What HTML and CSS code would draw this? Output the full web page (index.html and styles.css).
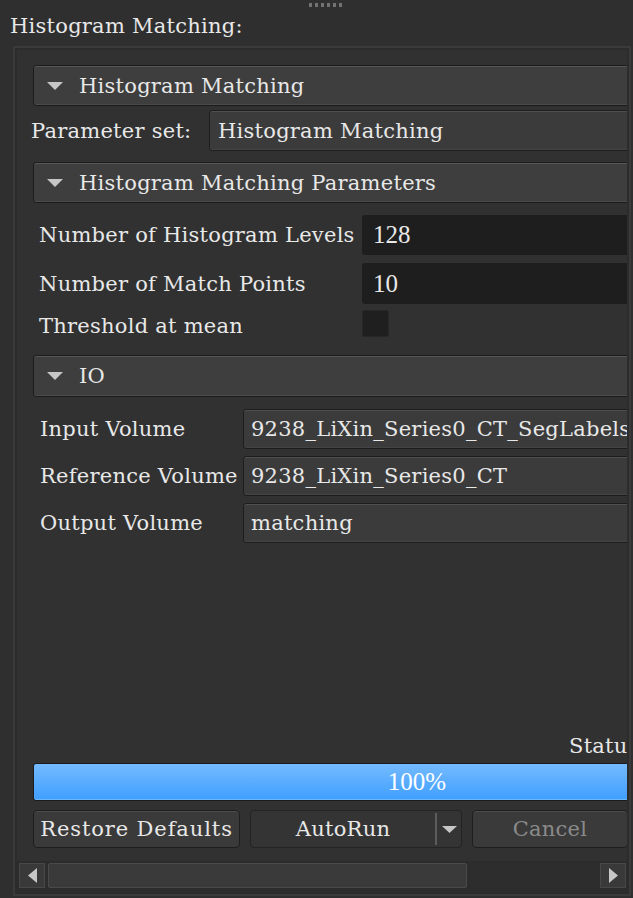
FILE: index.html
```html
<!DOCTYPE html>
<html>
<head>
<meta charset="utf-8">
<title>Histogram Matching</title>
<link rel="stylesheet" href="styles.css">
</head>
<body>
<div class="grip"><span></span><span></span><span></span><span></span><span></span><span></span></div>
<div class="title">Histogram Matching:</div>
<div class="frame">
  <div class="viewport">
    <div class="content">
      <div class="collapsible c1">
        <svg class="tri" width="16" height="8" viewBox="0 0 16 8"><polygon points="0,0 16,0 8,8"/></svg>
        <span>Histogram Matching</span>
      </div>
      <div class="param-set">
        <span class="lbl">Parameter set:</span>
        <div class="combo">Histogram Matching</div>
      </div>
      <div class="collapsible c2">
        <svg class="tri" width="16" height="8" viewBox="0 0 16 8"><polygon points="0,0 16,0 8,8"/></svg>
        <span>Histogram Matching Parameters</span>
      </div>
      <div class="form params">
        <div class="row r1"><span class="lbl">Number of Histogram Levels</span><div class="spin">128</div></div>
        <div class="row r2"><span class="lbl">Number of Match Points</span><div class="spin">10</div></div>
        <div class="row r3"><span class="lbl">Threshold at mean</span><div class="check"></div></div>
      </div>
      <div class="collapsible c3">
        <svg class="tri" width="16" height="8" viewBox="0 0 16 8"><polygon points="0,0 16,0 8,8"/></svg>
        <span>IO</span>
      </div>
      <div class="form io">
        <div class="row"><span class="lbl">Input Volume</span><div class="combo">9238_LiXin_Series0_CT_SegLabels</div></div>
        <div class="row"><span class="lbl">Reference Volume</span><div class="combo">9238_LiXin_Series0_CT</div></div>
        <div class="row"><span class="lbl">Output Volume</span><div class="combo">matching</div></div>
      </div>
      <div class="spacer"></div>
      <div class="status">Status</div>
      <div class="progress"><span>100%</span></div>
      <div class="buttons">
        <div class="btn restore">Restore Defaults</div>
        <div class="btn autorun">
          <span class="main">AutoRun</span>
          <span class="drop"><svg width="15" height="7" viewBox="0 0 15 7"><polygon points="0,0 15,0 7.5,7"/></svg></span>
        </div>
        <div class="btn cancel">Cancel</div>
      </div>
    </div>
  </div>
  <div class="hscroll">
    <div class="sbtn left"><svg width="9" height="15" viewBox="0 0 9 15"><polygon points="9,0 9,15 0,7.5"/></svg></div>
    <div class="track"><div class="thumb"></div></div>
    <div class="sbtn right"><svg width="9" height="15" viewBox="0 0 9 15"><polygon points="0,0 0,15 9,7.5"/></svg></div>
  </div>
</div>
</body>
</html>
```

FILE: styles.css
```css
* { box-sizing: border-box; }
html, body { margin: 0; padding: 0; }
body {
  background: #2f2f2f;
  width: 633px;
  height: 898px;
  overflow: hidden;
  font-family: "DejaVu Serif", "Liberation Serif", serif;
  font-size: 21px;
  letter-spacing: 0.25px;
  color: #e8e8e8;
  white-space: nowrap;
}

.grip { display: flex; gap: 3px; margin-left: 309px; padding-top: 3px; height: 7px; }
.grip span { width: 3px; height: 4px; background: #727272; }

.title { margin: 5px 0 0 10px; height: 28px; line-height: 28px; }

.frame {
  margin: 6px 0 0 13px;
  width: 618px;
  height: 850px;
  border: 2px solid #3a3a3a;
  padding: 2px 0 0 2px;
  background: #2c2c2c;
  display: flex;
  flex-direction: column;
}

.viewport {
  width: 610px;
  height: 811px;
  overflow: hidden;
  background: #313131;
}

.content {
  width: 800px;
  height: 811px;
  padding: 15px 16px 13px 16px;
  display: flex;
  flex-direction: column;
}

.collapsible {
  height: 41px;
  flex: none;
  display: flex;
  align-items: center;
  padding-left: 13px;
  background: #3e3e3e;
  border: 1px solid #1c1c1c;
  border-radius: 3px;
  box-shadow: inset 0 1px 0 #575757, inset 0 -1px 0 #4a4a4a;
}
.collapsible .tri { fill: #c6c6c6; margin-right: 16px; flex: none; }
.c2 { margin-top: 11px; }
.c3 { margin-top: 18px; height: 42px; }

.param-set {
  margin: 4px 0 0 -2px;
  height: 41px;
  display: flex;
  align-items: center;
}
.param-set .lbl { width: 178px; flex: none; }

.combo {
  flex: 1;
  height: 100%;
  display: flex;
  align-items: center;
  padding-left: 8px;
  background: #3b3b3b;
  border: 1px solid #1d1d1d;
  border-radius: 3px;
  box-shadow: inset 0 1px 0 #4f4f4f, inset 0 -1px 0 #444444;
}

.form { display: flex; flex-direction: column; }
.row { display: flex; align-items: center; flex: none; }

.params .row { padding-left: 6px; }
.params .lbl { width: 323px; flex: none; }
.params .r1 { margin-top: 12px; height: 40px; }
.params .r2 { margin-top: 8px; height: 41px; }
.params .r3 { margin-top: 6px; height: 27px; }
.params .r3 .lbl { position: relative; top: 2px; }

.spin {
  flex: 1;
  height: 100%;
  display: flex;
  align-items: center;
  padding-left: 11px;
  background: #1e1e1e;
  border-radius: 3px;
  font-family: "Liberation Serif", serif;
  font-size: 25px;
  letter-spacing: 0;
}

.check {
  width: 27px;
  height: 27px;
  background: #1f1f1f;
  border: 1px solid #272727;
  border-radius: 2px;
}

.io .row { padding-left: 7px; height: 40px; margin-top: 7px; }
.io .row:first-child { margin-top: 12px; }
.io .lbl { width: 203px; flex: none; }
.io .combo { padding-left: 7px; }

.spacer { flex: 1; }

.status { height: 20px; line-height: 20px; margin-left: 536px; flex: none; }

.progress {
  margin-top: 7px;
  height: 38px;
  flex: none;
  border: 1px solid #1b1b1b;
  border-radius: 3px;
  background: linear-gradient(#74baff, #3f9fff);
  box-shadow: inset 0 -1px 0 #6cb6ff;
  display: flex;
  align-items: center;
  justify-content: center;
  color: #ffffff;
  font-family: "Liberation Serif", serif;
  font-size: 25px;
  letter-spacing: 0;
}

.buttons { margin-top: 9px; height: 38px; display: flex; flex: none; }
.btn {
  height: 38px;
  flex: none;
  display: flex;
  align-items: center;
  justify-content: center;
  background: #3a3a3a;
  border: 1px solid #1e1e1e;
  border-radius: 4px;
  box-shadow: inset 0 1px 0 #4c4c4c;
}
.restore { width: 207px; letter-spacing: 0.9px; }
.autorun { width: 212px; margin-left: 10px; background: #343434; box-shadow: none; border-color: #232323; }
.autorun .main { flex: 1; text-align: center; }
.autorun .drop {
  width: 26px;
  border-left: 2px solid #5c5c5c;
  display: flex;
  align-items: center;
  justify-content: center;
  margin: 3px 0;
  height: 32px;
}
.autorun .drop svg { fill: #c6c6c6; }
.cancel { width: 156px; margin-left: 10px; color: #8a8a8a; }

.hscroll {
  margin: 2px 0 0 2px;
  width: 607px;
  height: 25px;
  display: flex;
  background: #2d2d2d;
}
.sbtn {
  width: 26px;
  flex: none;
  display: flex;
  align-items: center;
  justify-content: center;
  background: #393939;
  border: 1px solid #474747;
}
.sbtn svg { fill: #c8c8c8; }
.track { flex: 1; padding-left: 3px; display: flex; }
.thumb {
  width: 419px;
  height: 100%;
  background: #3a3a3a;
  border: 1px solid #4a4a4a;
  border-radius: 2px;
}
```
